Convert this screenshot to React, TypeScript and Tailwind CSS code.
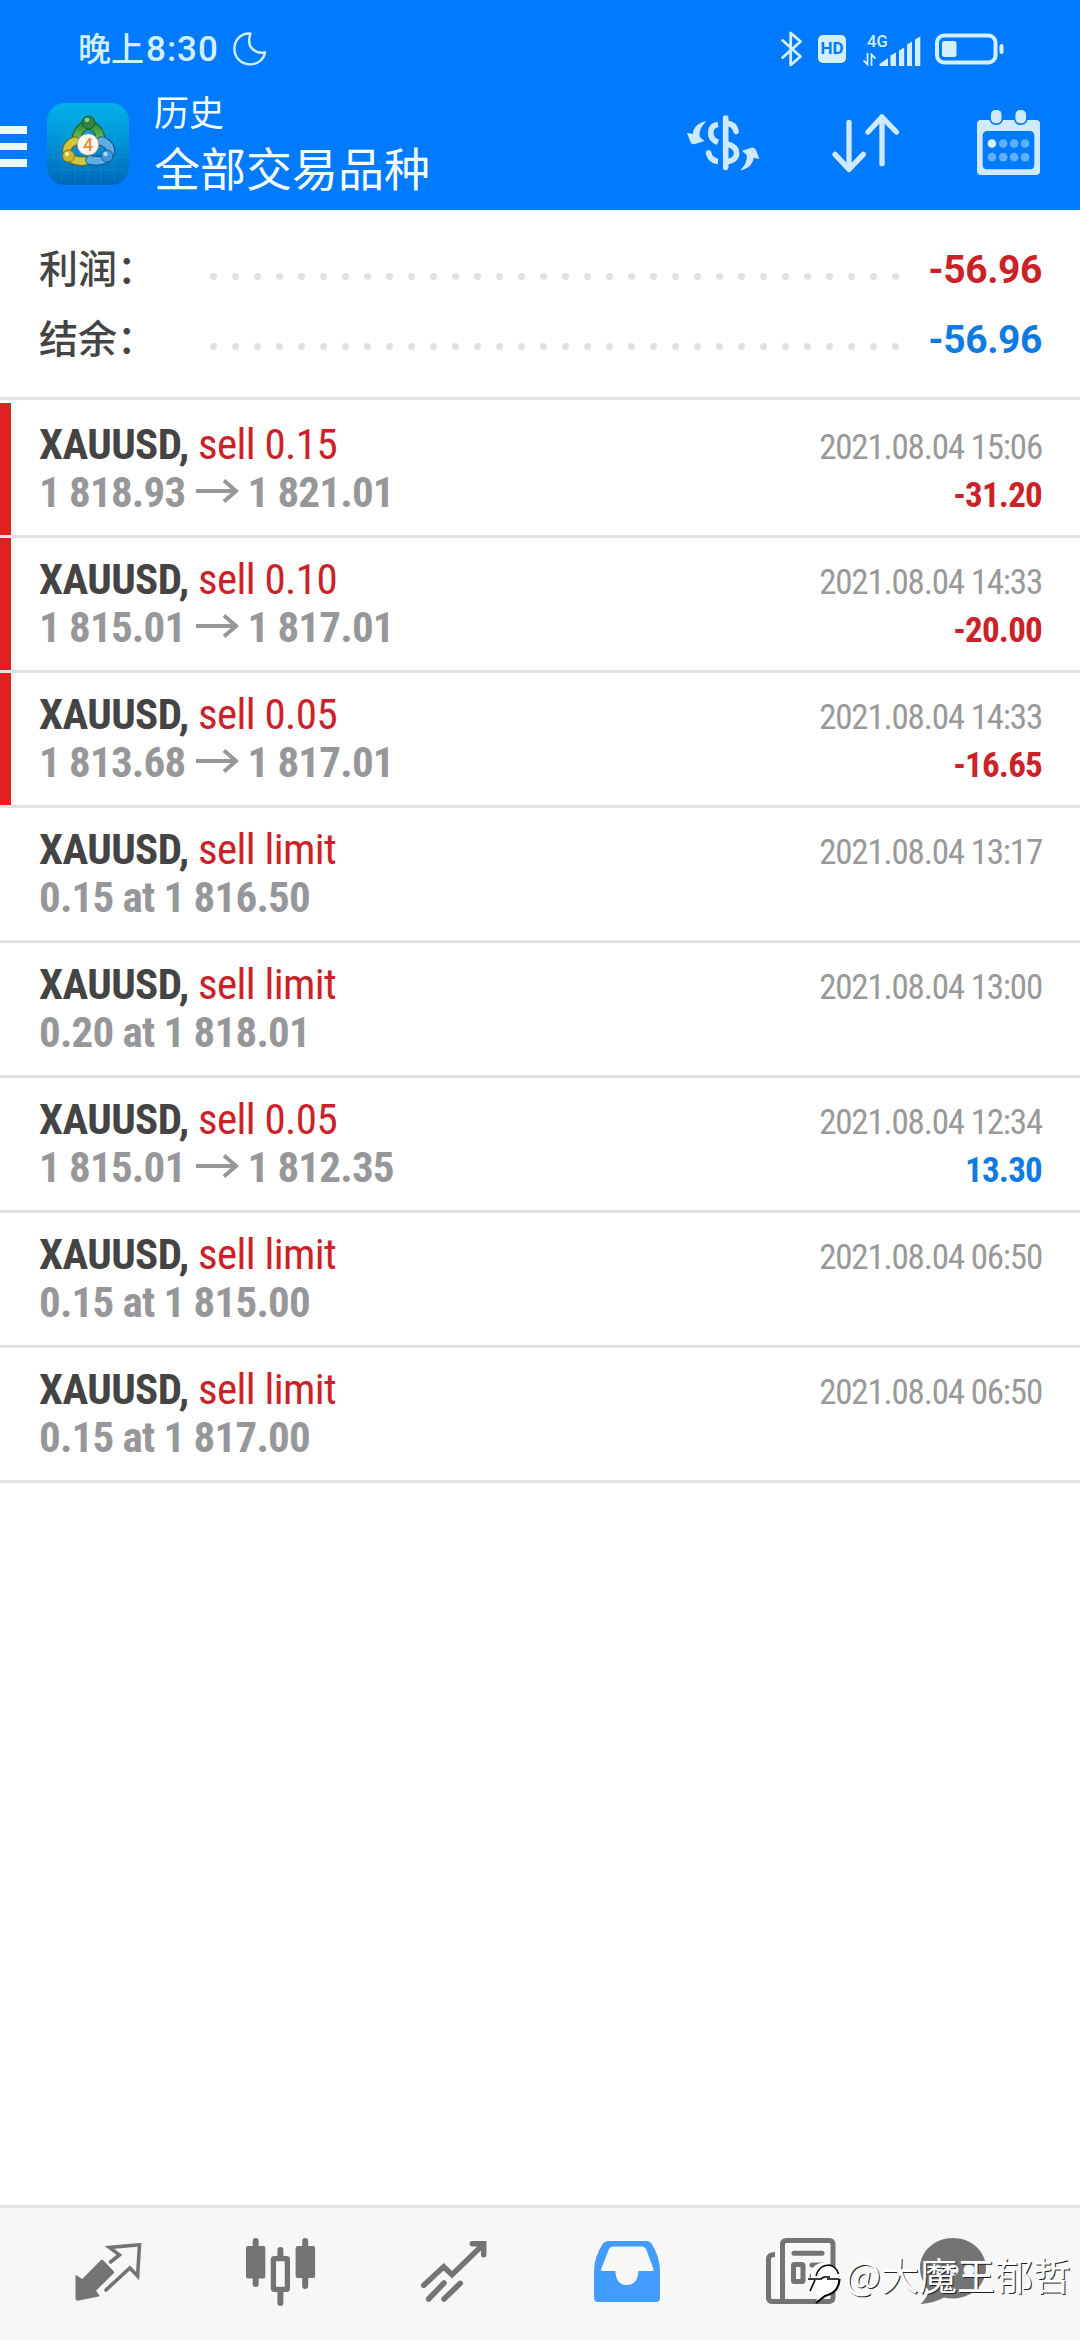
import React from 'react';

interface Deal {
  symbol: string;
  action: string;
  details?: string;
  open?: string;
  close?: string;
  time: string;
  profit?: string;
}

const deals: Deal[] = [
  { symbol: 'XAUUSD', action: 'sell 0.15', open: '1 818.93', close: '1 821.01', time: '2021.08.04 15:06', profit: '-31.20' },
  { symbol: 'XAUUSD', action: 'sell 0.10', open: '1 815.01', close: '1 817.01', time: '2021.08.04 14:33', profit: '-20.00' },
  { symbol: 'XAUUSD', action: 'sell 0.05', open: '1 813.68', close: '1 817.01', time: '2021.08.04 14:33', profit: '-16.65' },
  { symbol: 'XAUUSD', action: 'sell limit', details: '0.15 at 1 816.50', time: '2021.08.04 13:17' },
  { symbol: 'XAUUSD', action: 'sell limit', details: '0.20 at 1 818.01', time: '2021.08.04 13:00' },
  { symbol: 'XAUUSD', action: 'sell 0.05', open: '1 815.01', close: '1 812.35', time: '2021.08.04 12:34', profit: '13.30' },
  { symbol: 'XAUUSD', action: 'sell limit', details: '0.15 at 1 815.00', time: '2021.08.04 06:50' },
  { symbol: 'XAUUSD', action: 'sell limit', details: '0.15 at 1 817.00', time: '2021.08.04 06:50' },
];

const StatusBar = () => (
  <div className="flex h-[97px] items-center pl-[78px] pr-[76px] text-[#d2efff]">
    <span className="font-['Noto_Sans_CJK_SC',sans-serif] text-[33px] font-medium leading-[40px]">
      晚上<span className="ml-[2px] font-[Roboto,sans-serif] text-[35px] tracking-[1px]">8:30</span>
    </span>
    <svg className="ml-[14px]" width="34" height="34" viewBox="0 0 34 34" fill="none" stroke="currentColor" strokeWidth="2.4" strokeLinejoin="round">
      <path d="M17.500 1.600C5 1 1.400 11 1.400 17A15.400 15.400 0 0 0 17 32.400C25 32.400 31 27 32 20.500C22 22 12.500 15 17.500 1.600Z" />
    </svg>
    <div className="ml-auto flex items-center">
      <svg width="22" height="36" viewBox="0 0 22 36" fill="none" stroke="currentColor" strokeWidth="2.8" strokeLinecap="round" strokeLinejoin="round">
        <path d="M1.700 9.500 19.500 25.500 9.700 34V2L19.500 10.500 1.700 26.500" />
      </svg>
      <span className="ml-[15px] flex h-7 w-[28px] items-center justify-center rounded-[5px] bg-[#d2efff] font-[Roboto,sans-serif] text-[17px] font-bold leading-none text-[#007aff]">
        HD
      </span>
      <div className="ml-[17px] flex h-[34px] items-end">
        <div className="flex w-[26px] flex-col items-start">
          <span className="pl-[4px] font-[Roboto,sans-serif] text-[16.500px] font-medium leading-[18px]">4G</span>
          <svg className="mt-[2px]" width="14" height="13" viewBox="0 0 14 13" fill="none" stroke="currentColor" strokeWidth="1.800">
            <path d="M4.500 0V11.500L0.500 7.500M8.500 13V1.500L12.500 5.500" />
          </svg>
        </div>
        <svg className="-ml-[10px]" width="42" height="30" viewBox="0 0 42 30" fill="currentColor">
          <path d="M0.500 30V28L9 22V30ZM11.500 30V19.500L17 16.500V30ZM20 30V14.500L25.200 11.500V30ZM28 30V8.500L33 5.500V30ZM36 30V3.500L41.300 0.500V30Z" />
        </svg>
      </div>
      <svg className="ml-[14px]" width="69" height="32" viewBox="0 0 69 32">
        <rect x="2" y="2.500" width="58.500" height="27" rx="7" fill="none" stroke="currentColor" strokeWidth="4" />
        <rect x="7" y="8" width="14.500" height="16" rx="2.500" fill="currentColor" />
        <rect x="64.500" y="11" width="4" height="10" rx="2" fill="currentColor" />
      </svg>
    </div>
  </div>
);

const AppLogo = () => (
  <svg width="82" height="82" viewBox="0 0 82 82">
    <defs>
      <linearGradient id="logoBg" x1="0" y1="0" x2="0" y2="1">
        <stop offset="0" stopColor="#00b1ea" />
        <stop offset="0.450" stopColor="#0096d6" />
        <stop offset="1" stopColor="#0066b8" />
      </linearGradient>
      <linearGradient id="green" x1="0" y1="0" x2="0" y2="1">
        <stop offset="0" stopColor="#2f8f3a" />
        <stop offset="1" stopColor="#7dc35c" />
      </linearGradient>
    </defs>
    <rect width="82" height="82" rx="18" fill="url(#logoBg)" />
    <path d="M15 2V80M28 2V80M41 2V80M54 2V80M67 2V80M2 15H80M2 28H80M2 41H80M2 54H80M2 67H80" stroke="#3fc4ee" strokeWidth="0.700" opacity="0.250" />
    <g fill="none" strokeLinecap="round">
      <path d="M29.500 38C29.500 17 53.500 17 53.500 38" stroke="#1f5c2c" strokeWidth="9.500" />
      <path d="M29.500 38C29.500 17 53.500 17 53.500 38" stroke="url(#green)" strokeWidth="7.500" />
      <path d="M28 38C14 43 19 60 37 58" stroke="#66681c" strokeWidth="9.500" />
      <path d="M28 38C14 43 19 60 37 58" stroke="#d0c63e" strokeWidth="7.500" />
      <path d="M54 38C70 42 65 62 43 57" stroke="#174f86" strokeWidth="9.500" />
      <path d="M54 38C70 42 65 62 43 57" stroke="#5eaee3" strokeWidth="7.500" />
    </g>
    <circle cx="41.500" cy="19.500" r="6.500" fill="#2f8640" stroke="#1f5c2c" />
    <circle cx="40" cy="17" r="2.300" fill="#8fce88" />
    <circle cx="21.500" cy="53" r="6" fill="#cdb52f" stroke="#7b7322" />
    <circle cx="20" cy="51" r="2.200" fill="#f4ec96" />
    <circle cx="60" cy="53" r="6" fill="#3f98dc" stroke="#1b588f" />
    <circle cx="58.500" cy="51" r="2.200" fill="#a9dcfa" />
    <circle cx="41" cy="41.500" r="10.800" fill="#fbf8f2" stroke="#8a8d6c" strokeWidth="0.800" />
    <text x="41" y="48" textAnchor="middle" fontFamily="Roboto, sans-serif" fontSize="18" fontWeight="500" fill="#ee8a3c">4</text>
  </svg>
);

const Header = () => (
  <header className="h-[210px] bg-[#007aff]">
    <StatusBar />
    <div className="flex h-[113px]">
      <div className="mt-[29px] flex w-[27px] flex-col gap-[9px]">
        <div className="h-[7.5px] bg-[#eef9ff]" />
        <div className="h-[7.5px] bg-[#eef9ff]" />
        <div className="h-[7.5px] bg-[#eef9ff]" />
      </div>
      <div className="ml-5 mt-[6px]">
        <AppLogo />
      </div>
      <div className="ml-[25px] font-['Noto_Sans_CJK_SC',sans-serif] text-[#f4fcff]">
        <div className="-mt-[10px] text-[35px] leading-[48px]">历史</div>
        <div className="text-[46px] leading-[62px]">全部交易品种</div>
      </div>
      <div className="ml-auto flex text-[#cfe9ff]">
        <svg className="mt-[18px]" width="72" height="56" viewBox="0 0 216 168">
          <g fill="none" stroke="currentColor" strokeWidth="17" strokeLinecap="round">
            <path d="M116 9V157" />
            <path d="M120 25C138 27 145 36 147 49" />
            <path d="M120 87C140 92 149 102 149 115C149 128 138 138 120 141" />
            <path d="M93 28C78 31 71 40 71 53C71 66 80 77 93 82" strokeLinecap="butt" />
            <path d="M65 114C67 127 78 136 90 139" />
          </g>
          <path d="M93 120H107V160H93Z" fill="#007aff" />
          <path d="M58 19C38 22 20 34 17 57L0 53 10 80Q15 90 24 87L52 78 38 65C36 46 44 33 58 19Z" fill="currentColor" />
          <path d="M159 166C179 163 197 151 200 128L217 132 207 105Q202 95 193 98L165 107 179 120C181 139 173 152 159 166Z" fill="currentColor" />
        </svg>
        <svg className="ml-[73px] mt-[17px]" width="67" height="59" viewBox="0 0 201 177" fill="none" stroke="currentColor" strokeWidth="16" strokeLinecap="round" strokeLinejoin="round">
          <path d="M51 25V166M9 121 51 166 94 121M150 149V9M108 54 150 9 193 54" />
        </svg>
        <svg className="ml-[78px] mr-10 mt-[12px]" width="63" height="67" viewBox="0 0 190 200">
          <path fillRule="evenodd" d="M12 32H178Q190 32 190 44V186Q190 198 178 198H12Q0 198 0 186V44Q0 32 12 32ZM32 65Q17 65 17 80V166Q17 181 32 181H158Q173 181 173 166V80Q173 65 158 65Z" fill="currentColor" />
          <rect x="37" y="-3" width="42" height="50" rx="19" fill="#007aff" />
          <rect x="111" y="-3" width="42" height="50" rx="19" fill="#007aff" />
          <rect x="42" y="2" width="32" height="40" rx="14" fill="currentColor" />
          <rect x="116" y="2" width="32" height="40" rx="14" fill="currentColor" />
          <circle cx="45" cy="103" r="13" fill="#d5f0ff" />
          <g fill="#5fb0ff">
            <circle cx="79" cy="103" r="13" />
            <circle cx="112" cy="103" r="13" />
            <circle cx="145" cy="103" r="13" />
            <circle cx="45" cy="144" r="13" />
            <circle cx="79" cy="144" r="13" />
            <circle cx="112" cy="144" r="13" />
            <circle cx="145" cy="144" r="13" />
          </g>
        </svg>
      </div>
    </div>
  </header>
);

const SummaryRow = ({ label, value, color }: { label: string; value: string; color: string }) => (
  <div className="flex h-[70px] items-center pl-[39px] pr-[38px]">
    <div className="w-[171px] pb-[5px] font-['Noto_Sans_CJK_SC',sans-serif] text-[39px] font-medium leading-[65px] text-[#444]">{label}</div>
    <div className="mt-[15px] flex w-[689px] justify-between">
      {Array.from({ length: 32 }).map((_, i) => (
        <span key={i} className="size-[7px] rounded-full bg-[#e1e1e1]" />
      ))}
    </div>
    <div className={`ml-auto pt-[2px] font-[Roboto,sans-serif] text-[39px] font-bold leading-[68px] tracking-[-0.4px] ${color}`}>{value}</div>
  </div>
);

const DealRow = ({ deal }: { deal: Deal }) => {
  const isLoss = deal.profit?.startsWith('-');
  return (
    <div className="flex h-[135px] border-b-[3px] border-[#e2e2e2] font-['Roboto_Condensed',sans-serif]">
      <div className={`w-[11px] ${isLoss ? 'bg-[#e02020]' : ''}`} />
      <div className="flex-1 pl-7 pr-[38px] pt-[17px]">
        <div className="flex h-12 items-baseline justify-between leading-[48px]">
          <div className="text-[43px] tracking-[-0.6px]">
            <span className="font-bold text-[#444]">{deal.symbol},</span>{' '}
            <span className="text-[#cb2128]">{deal.action}</span>
          </div>
          <div className="text-[35px] tracking-[-1.2px] text-[#999]">{deal.time}</div>
        </div>
        <div className="flex h-12 items-baseline justify-between leading-[48px]">
          <div className="text-[43px] font-bold tracking-[-0.8px] text-[#97979a]">
            {deal.details ?? (
              <>
                {deal.open}
                <svg className="ml-[11px] mr-[8px] inline-block align-[4px]" width="43" height="24" viewBox="0 0 43 24" fill="none" stroke="currentColor" strokeWidth="4">
                  <path d="M0 12H40M28 1.500 40 12 28 22.500" />
                </svg>
                {deal.close}
              </>
            )}
          </div>
          <div className={`text-[35px] font-bold tracking-[-0.8px] ${isLoss ? 'text-[#cb2128]' : 'text-[#0f7be0]'}`}>{deal.profit}</div>
        </div>
      </div>
    </div>
  );
};

const TabBar = () => (
  <nav className="relative h-[135px] border-t-[3px] border-[#e2e2e2] bg-[#f7f7f7] text-[#747474]">
    <div className="flex items-start pl-[75px]">
      {/* quotes */}
      <svg className="mt-[35px]" width="67" height="59" viewBox="0 0 67 59">
        <path d="M0.500 31.700 7.200 36 25.500 17.500Q27 16 28.500 17.500L39 28.500Q39.500 29.500 38.500 30.500L21 47.700 25 53.300 2.500 57.800Q0.500 57.500 0.500 55.500Z" fill="currentColor" />
        <path d="M35.500 19 44.400 12 34.500 4.500 64.500 1.800 62.600 33 54.800 25 31 47" fill="none" stroke="currentColor" strokeWidth="3.600" strokeLinecap="round" />
      </svg>
      {/* charts */}
      <svg className="ml-[104px] mt-[30px]" width="70" height="68" viewBox="0 0 70 68" fill="none" stroke="currentColor" strokeWidth="6" strokeLinecap="round">
        <path d="M9.700 3V46M34.400 12V20M34.400 54V65M59.200 3V48" />
        <rect x="0" y="8" width="19.300" height="32.500" rx="2" fill="currentColor" stroke="none" />
        <rect x="49.600" y="8" width="19.500" height="32" rx="2" fill="currentColor" stroke="none" />
        <rect x="27.400" y="20.700" width="14" height="30.600" rx="1" strokeWidth="5.300" />
      </svg>
      {/* trade */}
      <svg className="ml-[105px] mt-[33px]" width="66" height="61" viewBox="0 0 66 61" fill="none" stroke="currentColor" strokeWidth="5.500" strokeLinecap="round">
        <path d="M2.800 44.300 22.700 25.700 31 33.700 62.700 3M51.300 2.800H62.700V13.700M7.600 58 23 42M23 58 39.300 42.300" />
      </svg>
      {/* history */}
      <svg className="ml-[107px] mt-[33px]" width="66" height="61" viewBox="0 0 66 61">
        <path fillRule="evenodd" fill="#419cfe" d="M14 0H53Q56 0 57.500 2.500Q66 16 66 30V57Q66 61 62 61H4Q0 61 0 57V30Q0 16 9 2.500Q11 0 14 0ZM19 5.500Q16 5.500 15 8L7 28.500Q7 30 8.500 30H21.400Q22 44 32.700 44Q43.500 44 44.500 30H58Q60 30 59.500 28L52 8Q51 5.500 48 5.500Z" />
      </svg>
      {/* news */}
      <svg className="ml-[106px] mt-[30px]" width="70" height="66" viewBox="0 0 70 66" fill="none" stroke="currentColor" strokeWidth="5">
        <path d="M16.500 63.500V6.500Q16.500 2.500 20.500 2.500H63Q67 2.500 67 6.500V59.500Q67 63.500 63 63.500H6Q2.500 63.500 2.500 59.500V21Q2.500 16.500 9 16.500" />
        <path d="M28 15.300H56" strokeLinecap="round" />
        <rect x="27.500" y="26.500" width="9.500" height="17" rx="1" />
        <path d="M46 27H56M46 38H56" strokeLinecap="round" />
      </svg>
      {/* chat */}
      <svg className="ml-[84px] mt-[30px]" width="66" height="66" viewBox="0 0 66 66">
        <path d="M33 0C51 0 66 13 66 30S51 60.500 33 60.500Q28 60.500 24 59.500Q14 65 0.500 66Q8 59 8.500 52Q0 42 0 30C0 13 15 0 33 0Z" fill="currentColor" />
        <g fill="#f7f7f7">
          <circle cx="17" cy="32" r="5.500" />
          <circle cx="33" cy="32" r="5.500" />
          <circle cx="49" cy="32" r="5.500" />
        </g>
      </svg>
    </div>
    {/* author signature laid over the tabs */}
    <div className="absolute right-[9px] top-[41px] flex items-start text-white">
      <svg className="mt-[13px]" width="37" height="42" viewBox="0 0 37 42">
        <path d="M3 18C2 6 8 0 16 1Q31 3 32 16Q32 30 17 34L8 40 11 33Q4 30 3 18Z" fill="#fff" />
        <path d="M8 14C10 7 15 3 21 3Q28 4 30.500 12M2 29 7 18M0 17H13L16 15H22M19 17H31" fill="none" stroke="#000" strokeWidth="1.600" />
        <path d="M31.500 17C31 28 25 32 17 34L8 41" fill="none" stroke="#000" strokeWidth="2.200" />
      </svg>
      <span className="whitespace-nowrap font-['Noto_Sans_CJK_SC',sans-serif] text-[38px] leading-[50px] [text-shadow:1px_1px_0.5px_#222]">@大魔王郁哲</span>
    </div>
  </nav>
);

const App = () => {
  return (
    <div className="flex h-[2340px] w-[1080px] flex-col overflow-hidden bg-white">
      <Header />
      <section className="mb-[3px] h-[190px] border-b-[3px] border-[#e2e2e2] pt-[24px]">
        <SummaryRow label="利润：" value="-56.96" color="text-[#cb2128]" />
        <SummaryRow label="结余：" value="-56.96" color="text-[#0f7be0]" />
      </section>
      <main className="flex-1">
        {deals.map((deal, i) => (
          <DealRow key={i} deal={deal} />
        ))}
      </main>
      <TabBar />
    </div>
  );
};

export default App;
